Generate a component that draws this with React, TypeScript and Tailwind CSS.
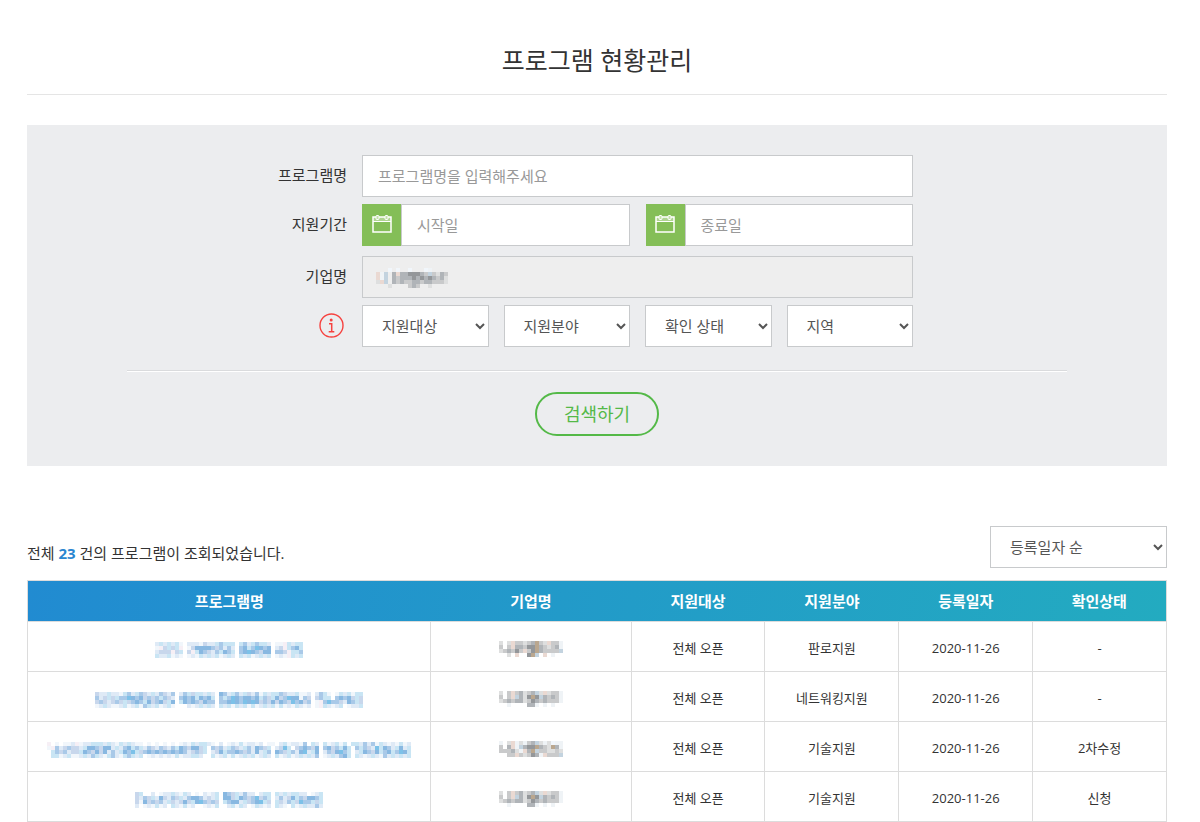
import { useId } from "react";

const TINTS: Record<string, string> = {
  a: "#f1f6fb",
  b: "#dfeaf6",
  c: "#c8d7ec",
  d: "#c9e5f4",
  e: "#a9c9e8",
  f: "#88b8e1",
  g: "#7cc1e8",
  p: "#f6eff5",
  w: "#eff3f6",
  x: "#dedfdf",
  y: "#c9cacb",
  z: "#b0b4b8",
  v: "#94979a",
  q: "#ead9d2",
  r: "#baa78f",
  s: "#c3d3df",
};

const CELL = 4;

function Mosaic({ rows, label }: { rows: string[]; label: string }) {
  const width = rows[0].length * CELL;
  const height = rows.length * CELL;
  return (
    <svg
      role="img"
      aria-label={label}
      width={width}
      height={height}
      viewBox={`0 0 ${width} ${height}`}
      shapeRendering="crispEdges"
      className="inline-block align-middle"
    >
      {rows.flatMap((row, y) =>
        row.split("").map((key, x) =>
          TINTS[key] ? (
            <rect key={`${x}-${y}`} x={x * CELL} y={y * CELL} width={CELL} height={CELL} fill={TINTS[key]} />
          ) : null,
        ),
      )}
    </svg>
  );
}

const COMPANY_FIELD = [
  "...a.a..a...aw....",
  "qws.zqzzvvvzysyxzy",
  "qws.zyzzzvzvzvzyzx",
  "xqs.zyzyyzzyzzyyyx",
  "...x....yzy..x....",
];

const COMPANY_A = [
  "x.xqyyxyzryxqyyw",
  "y.yqzzyvvrzyxyzw",
  "xyzyvyqyvrzyyyys",
  "..x.q..vrs.q.w..",
];
const COMPANY_B = [
  "x.yqyzxyzsxqxyyw",
  "y.yqszxvrvszyzyw",
  "xyzyzzxyvzyzyyyw",
  "..w....zzw.w.w..",
];
const COMPANY_C = [
  "w.xqwxwyzsxwxaww",
  "y.zqwszvvrzyxrzw",
  "yyyzxwqzrsyyxxyx",
  "..yyqyxyvzwqyyys",
];

const TITLES = [
  [
    "bdbdbda.bbbacbbdeddd.debdeddb.aapdbdd",
    "apcdcdp.acffffecebeb.efdegfef.bcpdefd",
    "bcccpcd.cpdfecbedfed.efgfecff.eecpdde",
    "dbbdaba.abadbdbdabdb.dbdabdbd.abapdbd",
  ],
  [
    "cbbdbbadebdecbdbecbe.bedcddbdb.febdebdcbeadbddecbbdaab.beda.adbdadd",
    "ebcdcdeegfefcecedecb.efefdfefd.edegfeffefdecdfcegffaec.cedd.efefcdc",
    "cecbcecdcefedfcefcdf.dfefecfee.eefgfegfgfcecfcfecgefce.apegeecbfedc",
    "abdbaabdabdaedbdabda...babdbdb.dbdadbdadabdbdadabadbab.apdbabd.abbd",
  ],
  [
    "p.a.aabpabbdddbdbadbdbaa.a.a.a.a.abadbddba.b.abadabbab.aa.bdabbae.db.dabdad.ddbebeadbabadab",
    "apebceccbdffecffbdbefdedbecbecbedfecffcd.ecebdecbdebfecd.bcgd.cefecf.efcedfd.edecbgdfebdfbd",
    ".decebccdfecfcfbebdfegdcefefefefefebcecd.bcfdeefecebfbde.fecdebfgbdf.becfged.bdfecfdefdegfd",
    ".ddabdaabdbedbadebadedbd.abababadabbddb..dabdadabdbdabdb.dabdabdbdbe.abdbefd.dbabdbaebdbdbd",
  ],
  [
    "cd..b.abbdbadb.a.babd.fecdbebb.bdd.dbdbddbb.abd",
    "cbecdbfcbecdbeffebcbd.ffcdfecegced.bebcfdecffed",
    "cafcecebdcbcfcdfgecec.deffbdcefgdc.dcbedcgeedcd",
    "b.abadab.dbadab..abad..bdadb.adbab.dba.dabdbbeb",
  ],
];

const PROGRAMS = [
  { title: TITLES[0], company: COMPANY_A, target: "전체 오픈", field: "판로지원", date: "2020-11-26", status: "-" },
  { title: TITLES[1], company: COMPANY_B, target: "전체 오픈", field: "네트워킹지원", date: "2020-11-26", status: "-" },
  { title: TITLES[2], company: COMPANY_C, target: "전체 오픈", field: "기술지원", date: "2020-11-26", status: "2차수정" },
  { title: TITLES[3], company: COMPANY_B, target: "전체 오픈", field: "기술지원", date: "2020-11-26", status: "신청" },
];

const HEADINGS = ["프로그램명", "기업명", "지원대상", "지원분야", "등록일자", "확인상태"];

const FIELD = "h-[42px] w-full min-w-0 border border-[#c8cacc] bg-white px-[15px] text-[15px] text-[#555] placeholder:text-[#999]";
const LABEL = "w-[69px] shrink-0 pb-[2px] text-right whitespace-nowrap";

function CalendarIcon() {
  return (
    <svg width="20" height="18" viewBox="0 0 20 18" aria-hidden="true">
      <rect x="1" y="2" width="18" height="4" fill="#fff" fillOpacity="0.35" />
      <path d="M1 2h18v15H1z" fill="none" stroke="#fff" strokeWidth="1.5" />
      <path d="M1 6.5h18" stroke="#fff" strokeWidth="1" />
      <rect x="4" y="0.5" width="3" height="4" rx="1" fill="#c3e2a8" stroke="#fff" />
      <rect x="13" y="0.5" width="3" height="4" rx="1" fill="#c3e2a8" stroke="#fff" />
    </svg>
  );
}

function InfoIcon() {
  return (
    <svg width="25" height="25" viewBox="0 0 25 25" aria-hidden="true">
      <circle cx="12.5" cy="12.5" r="11.5" fill="none" stroke="#f6423f" strokeWidth="1.4" />
      <circle cx="12.2" cy="7" r="1.5" fill="#f6423f" />
      <path d="M10 10.7h2.7v7.8M9.7 18.7h5.6" fill="none" stroke="#f6423f" strokeWidth="1.5" />
    </svg>
  );
}

function DateField({ label }: { label: string }) {
  const id = useId();
  return (
    <div className="flex min-w-0">
      <label htmlFor={id} aria-label={label} className="flex w-[39px] shrink-0 items-center justify-center bg-[#84be57] pb-[2px]">
        <CalendarIcon />
      </label>
      <input id={id} type="text" placeholder={label} className={FIELD} />
    </div>
  );
}

function Dropdown({ label }: { label: string }) {
  return (
    <select
      aria-label={label}
      className="h-[42px] w-full min-w-0 border border-[#c8cacc] bg-white pl-[15px] text-[15px] text-[#555]"
    >
      <option>{label}</option>
    </select>
  );
}

export default function App() {
  return (
    <main className="bg-white pr-[33px] pl-[27px] font-['Open_Sans','Noto_Sans_CJK_KR',sans-serif] text-[15px] text-[#333]">
      <h1 className="border-b border-[#e5e5e5] pt-[42px] pb-4 text-center text-[25px] leading-9">프로그램 현황관리</h1>

      <form
        onSubmit={(event) => event.preventDefault()}
        className="mt-[30px] bg-[#ecedef] px-[100px] pt-[30px] pb-[30px]"
      >
        <div className="mx-auto flex w-full max-w-[638px] flex-col gap-[7px] pr-[3px]">
          <div className="flex items-center gap-[15px]">
            <label htmlFor="program" className={LABEL}>
              프로그램명
            </label>
            <input id="program" type="text" placeholder="프로그램명을 입력해주세요" className={FIELD} />
          </div>
          <div className="flex items-center gap-[15px]">
            <span className={LABEL}>지원기간</span>
            <div className="grid flex-1 grid-cols-2 gap-4">
              <DateField label="시작일" />
              <DateField label="종료일" />
            </div>
          </div>
          <div className="mt-[3px] flex items-center gap-[15px]">
            <label htmlFor="company" className={LABEL}>
              기업명
            </label>
            <div className="relative flex-1">
              <input
                id="company"
                type="text"
                disabled
                className="block h-[42px] w-full border border-[#c8cacc] bg-[#eeeeee] px-[15px]"
              />
              <span className="pointer-events-none absolute inset-y-0 left-[14px] flex items-center pt-px">
                <Mosaic rows={COMPANY_FIELD} label="기업명" />
              </span>
            </div>
          </div>
          <div className="flex items-center gap-[15px]">
            <span className="flex w-[69px] shrink-0 justify-end pr-[3px] pb-[2px]">
              <InfoIcon />
            </span>
            <div className="grid flex-1 grid-cols-4 gap-[15px]">
              <Dropdown label="지원대상" />
              <Dropdown label="지원분야" />
              <Dropdown label="확인 상태" />
              <Dropdown label="지역" />
            </div>
          </div>
        </div>
        <div className="mt-[23px] border-t border-b border-t-[#dadbdd] border-b-white" />
        <div className="mt-5 flex justify-center">
          <button
            type="submit"
            className="h-11 w-[124px] rounded-full border-2 border-[#54b948] text-[18px] text-[#54b948]"
          >
            검색하기
          </button>
        </div>
      </form>

      <div className="mt-[60px] flex items-end justify-between">
        <p className="pb-[3px] leading-6">
          전체 <strong className="font-bold text-[#2a86d0]">23</strong> 건의 프로그램이 조회되었습니다.
        </p>
        <div className="w-[177px]">
          <Dropdown label="등록일자 순" />
        </div>
      </div>

      <table className="mt-3 w-full table-fixed border-collapse border border-[#dcdcdc] text-center">
        <colgroup>
          <col className="w-[35.4%]" />
          <col className="w-[17.6%]" />
          <col />
          <col />
          <col />
          <col />
        </colgroup>
        <thead>
          <tr className="h-[41px] bg-[linear-gradient(100deg,#218bd1,#23abc0)] text-white">
            {HEADINGS.map((heading) => (
              <th key={heading} scope="col" className="font-bold">
                {heading}
              </th>
            ))}
          </tr>
        </thead>
        <tbody className="text-[13px]">
          {PROGRAMS.map((program, index) => (
            <tr key={index} className="h-[50px] [&>td]:border [&>td]:border-[#dcdcdc] [&>td]:pt-[5px]">
              <td>
                <a href="#" className="inline-block align-middle leading-none">
                  <Mosaic rows={program.title} label="프로그램명" />
                </a>
              </td>
              <td className="leading-none">
                <Mosaic rows={program.company} label="기업명" />
              </td>
              <td>{program.target}</td>
              <td>{program.field}</td>
              <td>{program.date}</td>
              <td>{program.status}</td>
            </tr>
          ))}
        </tbody>
      </table>
    </main>
  );
}
